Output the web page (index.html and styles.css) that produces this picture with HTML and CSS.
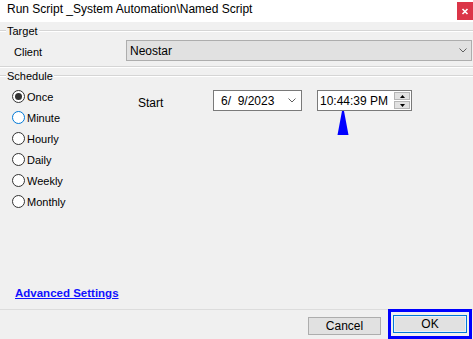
FILE: index.html
```html
<!DOCTYPE html>
<html>
<head>
<meta charset="utf-8">
<link rel="stylesheet" href="styles.css">
</head>
<body>
<div class="window">
  <div class="titlebar">
    <span class="title">Run Script _System Automation\Named Script</span>
    <span class="close"><svg width="16" height="18" viewBox="0 0 16 18"><path d="M5.5 7 L10.5 12 M10.5 7 L5.5 12" stroke="#fff" stroke-width="1.6"/></svg></span>
  </div>
  <div class="content">
    <div class="group-head first"><span class="lead"></span><span class="gtext">Target</span><span class="rule"></span></div>
    <div class="client-row">
      <span class="client-label">Client</span>
      <div class="combo"><span>Neostar</span><svg width="8" height="5" viewBox="0 0 8 5"><path d="M0.5 0.5 L4 4 L7.5 0.5" fill="none" stroke="#606060" stroke-width="1"/></svg></div>
    </div>
    <div class="group-end"></div>
    <div class="group-head second"><span class="lead"></span><span class="gtext">Schedule</span><span class="rule"></span></div>
    <div class="schedule">
      <div class="radios">
        <div class="radio"><span class="dot checked"></span><span>Once</span></div>
        <div class="radio"><span class="dot focus"></span><span>Minute</span></div>
        <div class="radio"><span class="dot"></span><span>Hourly</span></div>
        <div class="radio"><span class="dot"></span><span>Daily</span></div>
        <div class="radio"><span class="dot"></span><span>Weekly</span></div>
        <div class="radio"><span class="dot"></span><span>Monthly</span></div>
      </div>
      <div class="start-row">
        <span class="start-label">Start</span>
        <div class="datebox"><span>6/&nbsp;&nbsp;9/2023</span><svg width="8" height="5" viewBox="0 0 8 5"><path d="M0.5 0.5 L4 4 L7.5 0.5" fill="none" stroke="#606060" stroke-width="1"/></svg></div>
        <div class="timebox">
          <span class="timetext">10:44:39 PM</span>
          <div class="spin">
            <div class="spin-btn"><svg width="5" height="3" viewBox="0 0 5 3"><path d="M0 3 L2.5 0 L5 3 Z" fill="#000"/></svg></div>
            <div class="spin-btn"><svg width="5" height="3" viewBox="0 0 5 3"><path d="M0 0 L2.5 3 L5 0 Z" fill="#000"/></svg></div>
          </div>
          <svg class="arrow" width="12" height="25" viewBox="0 0 12 25"><path d="M5 0 L7 0 L11.5 24 L0.5 24 Z" fill="#0000ff"/></svg>
        </div>
      </div>
    </div>
    <div class="link-row"><a class="adv" href="#">Advanced Settings</a></div>
    <div class="separator"></div>
    <div class="footer">
      <button class="btn cancel">Cancel</button>
      <div class="focus-ring"><button class="btn ok">OK</button></div>
    </div>
  </div>
</div>
</body>
</html>
```
FILE: styles.css
```css
html, body {
  margin: 0;
  padding: 0;
}
body {
  width: 473px;
  height: 339px;
  overflow: hidden;
  background: #f0f0f0;
  font-family: "Liberation Sans", Arial, sans-serif;
  font-size: 11px;
  color: #000;
}
.window {
  display: flex;
  flex-direction: column;
  width: 473px;
  height: 339px;
}
.titlebar {
  height: 22px;
  background: #fff;
  display: flex;
  justify-content: space-between;
  align-items: flex-start;
}
.title {
  font-size: 12px;
  padding-left: 7px;
  line-height: 18px;
}
.close {
  width: 16px;
  height: 18px;
  margin-top: 2px;
  background: #db3548;
  display: block;
}
.close svg { display: block; }
.content {
  flex: 1;
  display: flex;
  flex-direction: column;
}
.group-head {
  display: flex;
  align-items: center;
  height: 12px;
}
.group-head.first { margin-top: 3px; }
.group-head.second { margin-top: 2px; }
.lead, .rule {
  height: 0;
  border-top: 1px solid #d5d5d5;
  border-bottom: 1px solid #fff;
}
.lead { width: 6px; }
.rule { flex: 1; }
.gtext {
  padding: 0 1px;
  line-height: 12px;
}
.client-row {
  margin-top: 3px;
  height: 21px;
  display: flex;
  align-items: center;
}
.client-label {
  width: 126px;
  padding-left: 14px;
  padding-top: 3px;
  box-sizing: border-box;
}
.combo {
  flex: 1;
  margin-right: 1px;
  height: 21px;
  box-sizing: border-box;
  background: #e1e1e1;
  border: 1px solid #adadad;
  display: flex;
  align-items: center;
  justify-content: space-between;
  padding: 0 4px 0 3px;
  font-size: 12px;
}
.group-end {
  margin-top: 5px;
  height: 0;
  border-top: 1px solid #d5d5d5;
  border-bottom: 1px solid #fff;
}
.schedule {
  flex: 1;
  display: flex;
  align-items: flex-start;
}
.radios {
  width: 138px;
  box-sizing: border-box;
  padding-left: 12px;
  margin-top: 4px;
  display: flex;
  flex-direction: column;
}
.radio {
  height: 21px;
  display: flex;
  align-items: center;
  gap: 2px;
}
.dot {
  width: 13px;
  height: 13px;
  box-sizing: border-box;
  border: 1px solid #333;
  border-radius: 50%;
  background: #fff;
  display: flex;
  align-items: center;
  justify-content: center;
}
.dot.focus { border-color: #0078d7; }
.dot.checked::after {
  content: "";
  width: 7px;
  height: 7px;
  border-radius: 50%;
  background: #333;
}
.start-row {
  margin-top: 8px;
  display: flex;
  align-items: center;
}
.start-label {
  width: 75px;
  font-size: 12px;
  padding-top: 4px;
}
.datebox {
  width: 89px;
  height: 21px;
  box-sizing: border-box;
  background: #fff;
  border: 1px solid #7a7a7a;
  display: flex;
  align-items: center;
  justify-content: space-between;
  padding: 0 5px 0 7px;
  font-size: 12px;
}
.timebox {
  position: relative;
  margin-left: 15px;
  width: 95px;
  height: 21px;
  box-sizing: border-box;
  background: #fff;
  border: 1px solid #7a7a7a;
  display: flex;
  align-items: center;
  justify-content: space-between;
  padding: 0 1px 0 2px;
  font-size: 12px;
}
.spin {
  display: flex;
  flex-direction: column;
  gap: 1px;
}
.spin-btn {
  width: 16px;
  height: 8px;
  box-sizing: border-box;
  background: #e1e1e1;
  border: 1px solid #b5b5b5;
  display: flex;
  align-items: center;
  justify-content: center;
}
.spin-btn svg { display: block; }
.arrow {
  position: absolute;
  left: 19px;
  top: 20px;
}
.link-row {
  height: 13px;
  padding-left: 15px;
  margin-bottom: 9px;
  line-height: 13px;
}
.adv {
  color: #1010ff;
  font-weight: bold;
  font-size: 11.5px;
  text-decoration: underline;
}
.separator {
  height: 1px;
  background: #dcdcdc;
}
.footer {
  height: 29px;
  display: flex;
  justify-content: flex-end;
  align-items: flex-start;
}
.btn {
  font-family: "Liberation Sans", Arial, sans-serif;
  font-size: 12px;
  height: 18px;
  box-sizing: border-box;
  background: #e1e1e1;
  border: 1px solid #adadad;
  padding: 0;
  margin: 0;
  color: #000;
  line-height: 16px;
}
.cancel {
  width: 73px;
  margin-top: 7px;
}
.focus-ring {
  margin-top: -1px;
  margin-left: 7px;
  margin-right: 1px;
  width: 84px;
  height: 30px;
  box-sizing: border-box;
  border: 3px solid #0000ff;
  display: flex;
  align-items: center;
  justify-content: center;
}
.ok {
  width: 74px;
  border: 1px solid #0078d7;
  box-shadow: inset 0 0 0 1px #e5f1fb;
}
```
